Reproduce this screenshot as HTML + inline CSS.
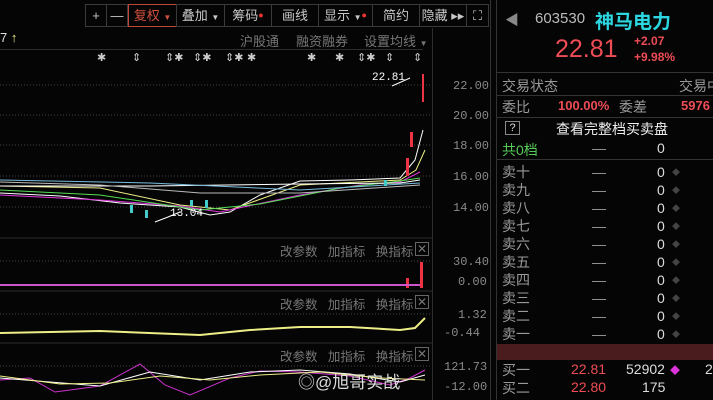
<!DOCTYPE html>
<html><head><meta charset="utf-8"><style>
*{margin:0;padding:0;box-sizing:border-box}
body{width:713px;height:400px;background:#050505;overflow:hidden;position:relative;font-family:"Liberation Sans","Noto Sans CJK SC",sans-serif;color:#aaa}
.a{position:absolute;white-space:nowrap}
.tb{position:absolute;top:4px;height:23px;border:1px solid #3a3a3a;font-size:13px;color:#c8c8c8;line-height:21px;text-align:center}
.m{font-family:"Liberation Mono",monospace;font-size:12px;color:#8a8a8a}
.g{font-size:13px;color:#777}
.r{font-size:14px;color:#9a9a9a}
.hl{position:absolute;height:1px;background:#2c2c2c}
.x{position:absolute;width:14px;height:14px;border:1px solid #666;color:#777;font-size:12px;line-height:12px;text-align:center}
.s{position:absolute;top:51px;font-size:11px;color:#ccc}
</style></head><body>
<div class="tb" style="left:85px;width:22px">+</div>
<div class="tb" style="left:106px;width:22px">—</div>
<div class="tb" style="left:128px;width:49px;border-color:#c0473a;color:#d0503f">复权 <span style="font-size:8px">▼</span></div>
<div class="tb" style="left:176px;width:49px">叠加 <span style="font-size:8px">▼</span></div>
<div class="tb" style="left:224px;width:48px">筹码<span style="color:#e33;font-size:9px;vertical-align:top">●</span></div>
<div class="tb" style="left:271px;width:48px">画线</div>
<div class="tb" style="left:318px;width:55px">显示 <span style="font-size:8px">▼</span><span style="color:#e33;font-size:9px;vertical-align:top">●</span></div>
<div class="tb" style="left:372px;width:48px">简约</div>
<div class="tb" style="left:419px;width:48px">隐藏 ▸▸</div>
<div class="tb" style="left:466px;width:23px">⛶</div>
<div class="a" style="left:0;top:30px;font-size:13px;color:#ddd">7 <span style="color:#ee8">↑</span></div>
<div class="a g" style="left:240px;top:31px">沪股通</div>
<div class="a g" style="left:296px;top:31px">融资融券</div>
<div class="a g" style="left:364px;top:31px">设置均线 <span style="font-size:8px">▼</span></div>
<div class="hl" style="left:0;top:49px;width:423px"></div>
<span class="s" style="left:97px">✱</span><span class="s" style="left:132px">⇕</span><span class="s" style="left:165px">⇕✱</span><span class="s" style="left:193px">⇕✱</span><span class="s" style="left:225px">⇕✱</span><span class="s" style="left:247px">✱</span><span class="s" style="left:307px">✱</span><span class="s" style="left:335px">✱</span><span class="s" style="left:357px">⇕✱</span><span class="s" style="left:385px">⇕</span><span class="s" style="left:413px">⇕</span>
<div class="a" style="left:432px;top:28px;width:1px;height:372px;background:#2c2c2c"></div>
<div class="a" style="left:490px;top:0;width:1px;height:400px;background:#333"></div>
<div class="a" style="left:496px;top:0;width:1px;height:400px;background:#333"></div>
<svg class="a" style="left:0;top:0" width="432" height="400">
<g stroke="#444" stroke-dasharray="1,2">
<line x1="0" y1="85" x2="432" y2="85"/><line x1="0" y1="115" x2="432" y2="115"/><line x1="0" y1="145" x2="432" y2="145"/><line x1="0" y1="176" x2="432" y2="176"/><line x1="0" y1="207" x2="432" y2="207"/>
<line x1="0" y1="261" x2="432" y2="261"/><line x1="0" y1="314" x2="432" y2="314"/><line x1="0" y1="366" x2="432" y2="366"/>
</g>
<g stroke="#2c2c2c"><line x1="0" y1="238" x2="432" y2="238"/><line x1="0" y1="291" x2="432" y2="291"/><line x1="0" y1="343" x2="432" y2="343"/></g>
<g fill="none" stroke-width="1">
<polyline stroke="#fff" points="0,193 60,196 120,203 180,207 210,215 230,212 260,195 300,181 350,180 400,178 415,160 423,130"/>
<polyline stroke="#ee8" points="0,186 100,188 180,205 230,210 300,185 360,182 400,180 416,170 425,150"/>
<polyline stroke="#d3d" points="0,195 100,200 180,206 220,212 300,195 360,185 400,182 420,172"/>
<polyline stroke="#5d5" points="0,190 100,195 200,210 260,204 340,188 400,181 420,178"/>
<polyline stroke="#fff" points="0,186 150,186 300,184 400,183 420,180"/>
<polyline stroke="#7bd" points="0,180 150,183 300,190 420,183"/>
<polyline stroke="#bbb" points="0,182 100,185 200,193 300,193 420,185"/>
<polyline stroke="#fff" points="392,86 410,78"/>
<polyline stroke="#fff" points="155,222 168,217 180,212"/>
</g>
<g fill="#e34"><rect x="422" y="74" width="2" height="28"/><rect x="410" y="132" width="3" height="15"/><rect x="406" y="158" width="3" height="18"/><rect x="420" y="262" width="3" height="26"/><rect x="406" y="278" width="3" height="10"/></g>
<g fill="#4cc"><rect x="190" y="200" width="3" height="6"/><rect x="205" y="200" width="3" height="8"/><rect x="384" y="180" width="3" height="6"/><rect x="130" y="205" width="3" height="8"/><rect x="145" y="210" width="3" height="8"/></g>
<g fill="#c5c"><rect x="0" y="284" width="420" height="2"/></g>
<polyline fill="none" stroke="#ee8" stroke-width="2" points="0,333 100,331 200,335 250,330 300,327 350,327 400,330 415,328 425,318"/>
<g fill="none"><polyline stroke="#c3c" points="0,380 30,378 55,392 100,386 140,364 165,385 190,395 230,378 260,371 300,372 350,376 390,385 410,378 425,370"/>
<polyline stroke="#fff" points="0,378 50,382 100,386 150,372 200,380 250,372 300,370 350,374 400,382 425,375"/>
<polyline stroke="#ee8" points="0,376 60,384 110,383 160,376 210,380 260,375 320,372 380,378 425,380"/></g>
</svg>
<div class="a" style="left:372px;top:72px;font-size:11px;color:#fff;font-family:'Liberation Mono',monospace">22.81</div>
<div class="a" style="left:170px;top:208px;font-size:11px;color:#fff;font-family:'Liberation Mono',monospace">13.04</div>
<div class="a m" style="left:453px;top:79px">22.00</div>
<div class="a m" style="left:453px;top:109px">20.00</div>
<div class="a m" style="left:453px;top:139px">18.00</div>
<div class="a m" style="left:453px;top:170px">16.00</div>
<div class="a m" style="left:453px;top:201px">14.00</div>
<div class="a m" style="left:453px;top:255px">30.40</div>
<div class="a m" style="left:458px;top:275px">0.00</div>
<div class="a m" style="left:458px;top:308px">1.32</div>
<div class="a m" style="left:444px;top:326px">-0.44</div>
<div class="a m" style="left:444px;top:360px">121.73</div>
<div class="a m" style="left:444px;top:380px">-12.00</div>
<div class="a g" style="left:280px;top:241px;font-size:12.5px">改参数&nbsp;&nbsp;&nbsp;加指标&nbsp;&nbsp;&nbsp;换指标</div><div class="x" style="left:415px;top:242px">✕</div>
<div class="a g" style="left:280px;top:294px;font-size:12.5px">改参数&nbsp;&nbsp;&nbsp;加指标&nbsp;&nbsp;&nbsp;换指标</div><div class="x" style="left:415px;top:295px">✕</div>
<div class="a g" style="left:280px;top:346px;font-size:12.5px">改参数&nbsp;&nbsp;&nbsp;加指标&nbsp;&nbsp;&nbsp;换指标</div><div class="x" style="left:415px;top:347px">✕</div>
<div class="a" style="left:298px;top:368px;font-size:17px;color:#ddd">◎@旭哥实战</div>
<div class="a" style="left:505px;top:10px;font-size:14px;color:#888">◀</div>
<div class="a" style="left:535px;top:10px;font-size:15px;color:#bbb">603530</div>
<div class="a" style="left:595px;top:7px;font-size:19px;color:#2cd6e0;font-weight:bold">神马电力</div>
<div class="a" style="left:555px;top:35px;font-size:25px;color:#ef4d55">22.81</div>
<div class="a" style="left:634px;top:33px;font-size:12px;color:#ef4d55;font-weight:bold;line-height:16px">+2.07<br>+9.98%</div>
<div class="hl" style="left:497px;top:72px;width:216px;background:#333"></div>
<div class="a r" style="left:502px;top:76px">交易状态</div><div class="a r" style="left:679px;top:76px">交易中</div>
<div class="hl" style="left:497px;top:95px;width:216px;background:#333"></div>
<div class="a r" style="left:502px;top:97px">委比</div>
<div class="a" style="left:558px;top:98px;font-size:13px;color:#ef4d55;font-weight:bold">100.00%</div>
<div class="a r" style="left:619px;top:97px">委差</div>
<div class="a" style="left:681px;top:98px;font-size:13px;color:#ef4d55;font-weight:bold">5976</div>
<div class="hl" style="left:497px;top:117px;width:216px;background:#333"></div>
<div class="a" style="left:505px;top:121px;width:15px;height:14px;border:1px solid #888;font-size:11px;color:#ddd;text-align:center;line-height:12px">?</div>
<div class="a" style="left:556px;top:119px;font-size:14px;color:#eee">查看完整档买卖盘</div>
<div class="a" style="left:502px;top:140px;font-size:14px;color:#5c5">共0档</div>
<div class="a r" style="left:592px;top:140px">—</div><div class="a" style="left:657px;top:140px;font-size:14px;color:#ddd">0</div>
<div class="hl" style="left:497px;top:159px;width:216px;background:#333"></div>
<div class="a" style="left:497px;top:344px;width:216px;height:16px;background:#4a1c1e"></div>
<div class="a r" style="left:502px;top:360px">买一</div>
<div class="a" style="left:571px;top:361px;font-size:14px;color:#ef4d55">22.81</div>
<div class="a" style="left:626px;top:361px;font-size:14px;color:#ddd">52902</div>
<div class="a" style="left:670px;top:362px;font-size:10px;color:#d3d">◆</div>
<div class="a" style="left:705px;top:361px;font-size:14px;color:#ddd">2</div>
<div class="a r" style="left:502px;top:378px">买二</div>
<div class="a" style="left:571px;top:379px;font-size:14px;color:#ef4d55">22.80</div>
<div class="a" style="left:642px;top:379px;font-size:14px;color:#ddd">175</div>
<div class="a r" style="left:502px;top:163px;line-height:18px">卖十<br>卖九<br>卖八<br>卖七<br>卖六<br>卖五<br>卖四<br>卖三<br>卖二<br>卖一</div>
<div class="a r" style="left:592px;top:163px;line-height:18px">—<br>—<br>—<br>—<br>—<br>—<br>—<br>—<br>—<br>—</div>
<div class="a" style="left:657px;top:163px;line-height:18px;font-size:14px;color:#ddd">0<br>0<br>0<br>0<br>0<br>0<br>0<br>0<br>0<br>0</div>
<div class="a" style="left:672px;top:164px;line-height:18px;font-size:8px;color:#444">◆<br>◆<br>◆<br>◆<br>◆<br>◆<br>◆<br>◆<br>◆<br>◆</div>
</body></html>
